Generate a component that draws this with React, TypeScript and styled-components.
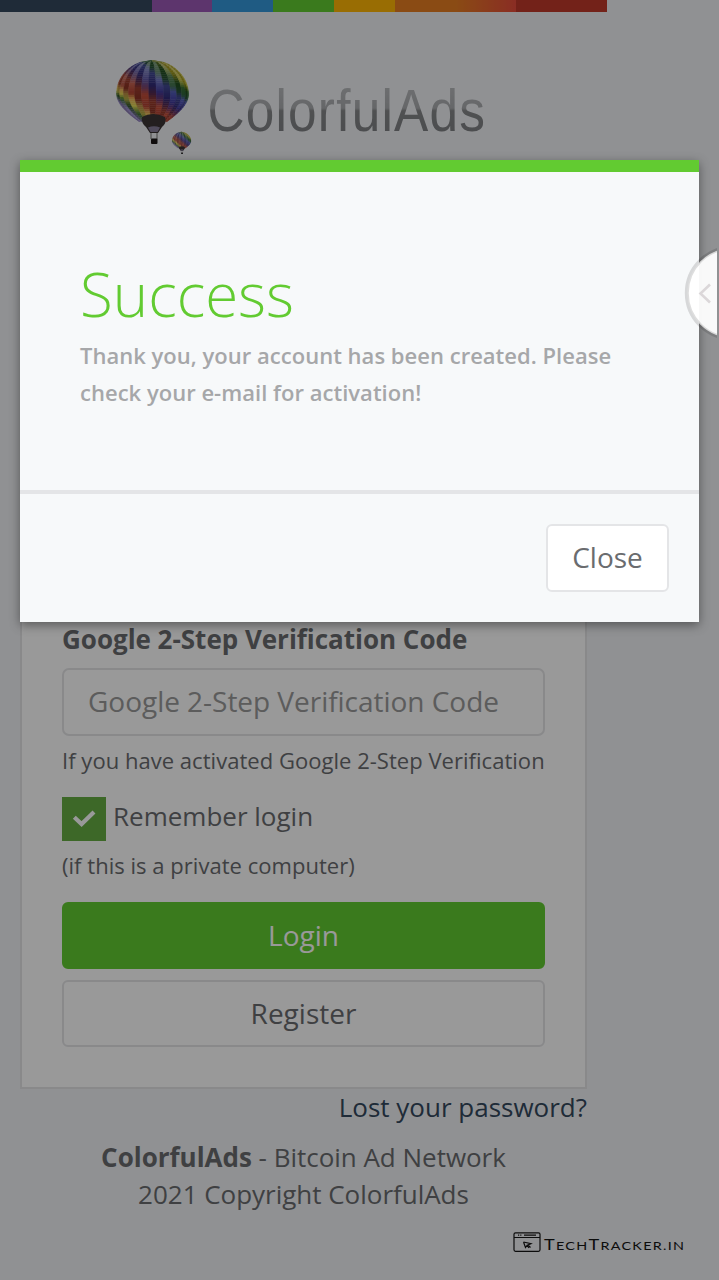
import React from 'react';
import styled, { createGlobalStyle } from 'styled-components';

const GlobalStyle = createGlobalStyle`
  * { box-sizing: border-box; }
  html, body { margin: 0; padding: 0; }
  body {
    background: #f0f2f5;
    color: #6a6c6f;
    font-family: 'Open Sans', 'Noto Sans', sans-serif;
    font-size: 26px;
    line-height: 37px;
    overflow: hidden;
  }
`;

const Screen = styled.div`
  position: relative;
  height: 1280px;
  overflow: hidden;
`;

const Page = styled.main`
  width: 607px;
  height: 1280px;
  display: flex;
  flex-direction: column;
`;

const ColorLine = styled.div`
  flex: none;
  height: 12px;
  background: linear-gradient(
    to right,
    #34495e 25%, #9b59b6 25%, #9b59b6 35%, #3498db 35%, #3498db 45%,
    #62cb31 45%, #62cb31 55%, #ffb606 55%, #ffb606 65%, #e67e22 65%,
    #e67e22 75%, #e74c3c 85%, #c0392b 85%
  );
`;

const Brand = styled.header`
  flex: none;
  height: 168px;
  padding: 38px 0 0 108px;
`;

const Content = styled.div`
  padding: 0 20px;
`;

const Card = styled.form`
  height: 909px;
  padding: 0 40px 40px;
  border: 2px solid #e4e5e7;
  background: #fff;
  display: flex;
  flex-direction: column;
  justify-content: flex-end;
`;

const Label = styled.label`
  font-weight: 700;
  font-size: 26px;
  letter-spacing: -0.02px;
  white-space: nowrap;
`;

const CodeInput = styled.input`
  height: 68px;
  margin-top: 10px;
  padding: 0 24px 2px;
  border: 2px solid #e4e5e7;
  border-radius: 7px;
  background: #fff;
  font: inherit;
  font-size: 28px;
  letter-spacing: -0.03px;
  &::placeholder { color: #999; opacity: 1; }
`;

const Help = styled.div<{ $gap: number }>`
  margin-top: ${(p) => p.$gap}px;
  font-size: 22px;
  letter-spacing: 0.03px;
  white-space: nowrap;
`;

const CheckRow = styled.div`
  margin-top: 18px;
  height: 44px;
  display: flex;
  gap: 7px;
  line-height: 39px;
`;

const CheckBox = styled.span`
  width: 44px;
  height: 44px;
  background: #66ad44;
`;

const Button = styled.button<{ $primary?: boolean; $gap?: number }>`
  flex: none;
  height: 67px;
  margin-top: ${(p) => p.$gap ?? 0}px;
  padding: 0;
  border: 2px solid ${(p) => (p.$primary ? '#62cb31' : '#e4e5e7')};
  border-radius: 6px;
  background: ${(p) => (p.$primary ? '#62cb31' : '#fff')};
  color: ${(p) => (p.$primary ? '#fff' : '#6a6c6f')};
  font: inherit;
  font-size: 28px;
`;

const CloseButton = styled(Button)`
  width: 123px;
  height: 68px;
  padding-bottom: 2px;
`;

const LostLink = styled.a`
  display: block;
  text-align: right;
  color: #34495e;
`;

const Footer = styled.footer`
  margin-top: 13px;
  text-align: center;
  letter-spacing: -0.02px;
`;

const Overlay = styled.div`
  position: absolute;
  inset: 0;
  padding: 160px 20px 0;
  background: rgba(0, 0, 0, 0.4);
`;

const Dialog = styled.section`
  height: 462px;
  border-top: 12px solid #62cb31;
  background: #f7f9fa;
  box-shadow: 0 3px 10px rgba(0, 0, 0, 0.42);
`;

const DialogBody = styled.div`
  height: 322px;
  padding: 79px 60px 0;
  border-bottom: 4px solid #e4e5e7;
`;

const Title = styled.h4`
  margin: 0;
  height: 86px;
  font-weight: 300;
  font-size: 60px;
  line-height: 86px;
  color: #62cb31;
`;

const Message = styled.p`
  margin: 0;
  font-weight: 600;
  font-size: 22px;
  letter-spacing: 0.02px;
  color: #a6a7a9;
  white-space: nowrap;
`;

const DialogFooter = styled.div`
  padding: 30px;
  display: flex;
  justify-content: flex-end;
`;

const Handle = styled.svg`
  position: absolute;
  right: 2px;
  top: 242px;
`;

const Watermark = styled.svg`
  position: absolute;
  left: 510px;
  top: 1226px;
`;

type Rgb = [number, number, number];

// Diagonal colour bands of the envelope, from the upper right to the lower left.
const BANDS: [number, Rgb][] = [
  [-54, [215, 200, 40]],
  [-43, [200, 190, 35]],
  [-37, [40, 100, 35]],
  [-30, [45, 100, 60]],
  [-24, [80, 90, 185]],
  [-12, [60, 52, 150]],
  [-4, [105, 50, 100]],
  [4, [195, 75, 55]],
  [15, [175, 62, 45]],
  [20, [235, 175, 85]],
  [25, [225, 215, 80]],
  [29, [60, 110, 45]],
  [34, [155, 140, 210]],
  [41, [175, 150, 205]],
  [47, [215, 95, 70]],
];

const bandColor = (d: number): Rgb => {
  if (d <= BANDS[0][0]) return BANDS[0][1];
  for (let i = 1; i < BANDS.length; i++) {
    const [d1, c1] = BANDS[i];
    if (d <= d1) {
      const [d0, c0] = BANDS[i - 1];
      const k = (d - d0) / (d1 - d0);
      return c0.map((v, n) => v + (c1[n] - v) * k) as Rgb;
    }
  }
  return BANDS[BANDS.length - 1][1];
};

const shade = (c: Rgb, light: boolean, t: number): string => {
  const target = light ? 215 : 15;
  const amount = light ? Math.max(0.03, 0.5 - t * 0.9) : 0.22;
  return `rgb(${c.map((v) => Math.round(v + (target - v) * amount)).join(',')})`;
};

const GORES = 15;
const ROWS = 30;
// Half width of the envelope at height t (0 = crown, 1 = mouth).
const halfWidth = (t: number) =>
  t < 0.55
    ? 36 * Math.sqrt(1 - Math.pow((0.55 - t) / 0.55, 2))
    : 36 * Math.cos(((t - 0.55) / 0.45) * 1.17);

const point = (g: number, r: number): [number, number] => {
  const t = r / ROWS;
  const u = Math.sin((g / GORES - 0.5) * Math.PI);
  return [44 + u * halfWidth(t) + t, 10.5 + t * 61];
};

function Balloon() {
  const patches: React.ReactNode[] = [];
  for (let r = 0; r < ROWS; r++) {
    for (let g = 0; g < GORES; g++) {
      const corners = [point(g, r), point(g + 1, r), point(g + 1, r + 1), point(g, r + 1)];
      const x = (corners[0][0] + corners[2][0]) / 2;
      const y = (corners[0][1] + corners[2][1]) / 2;
      const fill = shade(bandColor(y - 47 - (x - 44) * 0.9), g % 2 === 0, r / ROWS);
      patches.push(
        <polygon key={`${r}-${g}`} points={corners.map((c) => c.join(',')).join(' ')} fill={fill} stroke={fill} strokeWidth="0.4" />,
      );
    }
  }
  return (
    <g>
      {patches}
      <path d="M34 67 Q45 61 57 67 Q59 73 54 77 L50 83 H42 L38 77 Q33 73 34 67Z" fill="#3a3436" />
      <path d="M40 77.5 Q46 75 52 77.5 L49.5 82 H42.5Z" fill="#857e98" />
      <path d="M43 83 V89 M49 83 V89" stroke="#555" strokeWidth="0.8" />
      <rect x="43" y="88.5" width="6.5" height="5.5" rx="1" fill="#1a1515" />
    </g>
  );
}

function Logo() {
  return (
    <svg width="400" height="110" viewBox="0 0 400 110" role="img" aria-label="ColorfulAds">
      <defs>
        <linearGradient id="wordmark" gradientUnits="userSpaceOnUse" x1="0" y1="-44" x2="0" y2="1">
          <stop offset="0" stopColor="#b7b9bc" />
          <stop offset="0.48" stopColor="#a9abae" />
          <stop offset="0.54" stopColor="#858789" />
          <stop offset="1" stopColor="#7f8184" />
        </linearGradient>
        <filter id="soft"><feGaussianBlur stdDeviation="0.7" /></filter>
      </defs>
      <g filter="url(#soft)">
        <Balloon />
        <g transform="translate(62 79.5) scale(0.26)"><Balloon /></g>
        <text
          transform="translate(99.4 80.5) scale(0.87 1)"
          fontFamily="'Liberation Sans', Arial, sans-serif"
          fontSize="59"
          textLength="319"
          lengthAdjust="spacing"
          fill="url(#wordmark)"
        >
          ColorfulAds
        </text>
      </g>
    </svg>
  );
}

export default function App() {
  return (
    <Screen>
      <GlobalStyle />
      <Page>
        <ColorLine />
        <Brand><Logo /></Brand>
        <Content>
          <Card>
            <Label htmlFor="code">Google 2-Step Verification Code</Label>
            <CodeInput id="code" placeholder="Google 2-Step Verification Code" />
            <Help $gap={6}>If you have activated Google 2-Step Verification</Help>
            <CheckRow>
              <CheckBox>
                <svg width="44" height="44" viewBox="0 0 44 44">
                  <path d="M12.3 20.3 L19.6 27.1 L32 15.1" fill="none" stroke="#fff" strokeWidth="4.2" />
                </svg>
              </CheckBox>
              <span>Remember login</span>
            </CheckRow>
            <Help $gap={6}>(if this is a private computer)</Help>
            <Button type="button" $primary $gap={18}>Login</Button>
            <Button type="button" $gap={11}>Register</Button>
          </Card>
          <LostLink>Lost your password?</LostLink>
          <Footer>
            <strong>ColorfulAds</strong> - Bitcoin Ad Network
            <br />
            2021 Copyright ColorfulAds
          </Footer>
        </Content>
      </Page>

      <Overlay>
        <Dialog role="dialog">
          <DialogBody>
            <Title>Success</Title>
            <Message>
              Thank you, your account has been created. Please
              <br />
              check your e-mail for activation!
            </Message>
          </DialogBody>
          <DialogFooter>
            <CloseButton type="button">Close</CloseButton>
          </DialogFooter>
        </Dialog>
      </Overlay>

      <Handle width="34" height="102" viewBox="0 0 34 102">
        <circle cx="49.3" cy="51" r="45" fill="#fff" fillOpacity="0.95" />
        <circle cx="49.3" cy="51" r="45.5" fill="none" stroke="#000" strokeOpacity="0.13" strokeWidth="4" />
        <path d="M27 42.5 L17.5 51.5 L27 60.5" fill="none" stroke="#dbd7d9" strokeWidth="2.6" />
      </Handle>

      <Watermark width="180" height="32" viewBox="0 0 180 32">
        <g fill="none" stroke="#0c0c0c" strokeWidth="1.2">
          <rect x="4" y="6.8" width="26" height="18.5" rx="1.5" />
          <path d="M4 11.5 H30 M14 9.2 H26" />
          <path d="M8 9.2 H12" strokeDasharray="1.2 1" />
          <path d="M13.5 16 L21 17.6 L18 19 L20.5 21.5 M13.5 16 L15.5 21.5 L17 19.5 L19 22" />
        </g>
        <text
          transform="translate(34 24) scale(1.25 1)"
          textLength="112"
          fontFamily="Lato, sans-serif"
          fill="#0c0c0c"
          fontSize="11.5"
        >
          <tspan fontSize="14.5">T</tspan>ECH<tspan fontSize="14.5">T</tspan>RACKER.IN
        </text>
      </Watermark>
    </Screen>
  );
}
